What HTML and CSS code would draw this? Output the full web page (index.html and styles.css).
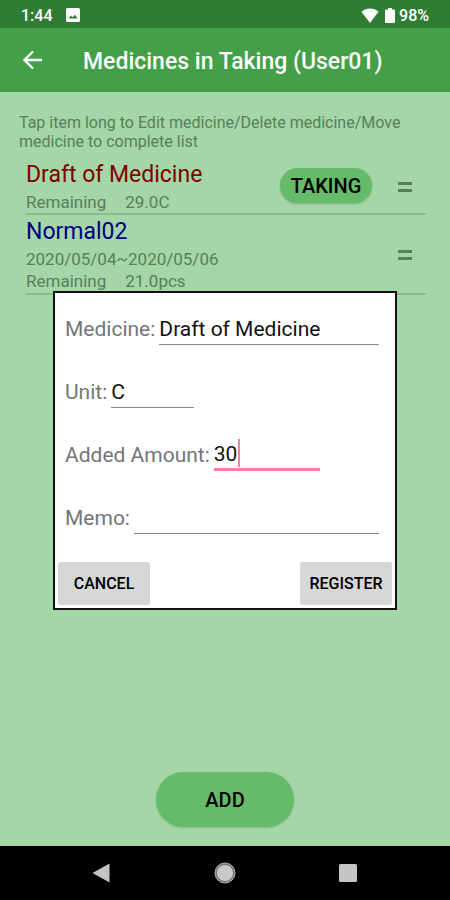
FILE: index.html
```html
<!DOCTYPE html>
<html lang="en">
<head>
<meta charset="utf-8">
<meta name="viewport" content="width=device-width, initial-scale=1">
<title>Medicines in Taking</title>
<link rel="stylesheet" href="styles.css">
</head>
<body>
<div class="status">
  <span class="time">1:44</span>
  <svg class="photo" viewBox="0 0 14 14" width="14" height="14" aria-hidden="true"><rect width="14" height="14" rx="1.5" fill="#fff"/><path d="M2.5 10.5 5 7.5l1.6 1.8L9 6.8l2.7 3.7z" fill="#2e7d32"/></svg>
  <span class="spacer"></span>
  <svg viewBox="0 0 18 15" width="18" height="15" aria-hidden="true"><path d="M9 15 .5 3.8C3 1.500 6 .5 9 .5s6 1 8.500 3.300z" fill="#fff"/></svg>
  <svg class="battery" viewBox="0 0 10 15" width="10" height="15" aria-hidden="true"><path d="M3 0h4v1.600h2q1 0 1 1V14q0 1-1 1H1q-1 0-1-1V2.600q0-1 1-1h2z" fill="#fff"/></svg>
  <span class="percent">98%</span>
</div>
<header class="appbar">
  <button class="back" type="button" aria-label="Back">
    <svg viewBox="0 0 20 20" width="20" height="20" aria-hidden="true"><path d="M19 10H2M10 1.500 1.500 10l8.500 8.500" fill="none" stroke="#fff" stroke-width="2.400"/></svg>
  </button>
  <h1>Medicines in Taking (User01)</h1>
</header>
<main class="content">
  <p class="hint">Tap item long to Edit medicine/Delete medicine/Move medicine to complete list</p>
  <ul class="list">
    <li class="item">
      <div class="info">
        <h2 class="name draft">Draft of Medicine</h2>
        <p class="detail"><span>Remaining</span><span>29.0C</span></p>
      </div>
      <button class="taking" type="button">TAKING</button>
      <span class="handle"></span>
    </li>
    <li class="item">
      <div class="info">
        <h2 class="name normal">Normal02</h2>
        <p class="detail">2020/05/04~2020/05/06</p>
        <p class="detail"><span>Remaining</span><span>21.0pcs</span></p>
      </div>
      <span class="handle"></span>
    </li>
  </ul>
  <button class="add" type="button">ADD</button>
</main>
<nav class="navbar">
  <button type="button" aria-label="Back"><svg viewBox="0 0 22 22" width="22" height="22" aria-hidden="true"><path d="M18.500 1.500v19L1.500 11z" fill="#c4c4c4"/></svg></button>
  <button type="button" aria-label="Home"><svg viewBox="0 0 22 22" width="22" height="22" aria-hidden="true"><circle cx="11" cy="11" r="10" fill="#777" stroke="#b4b4b4"/><circle cx="11" cy="11" r="8" fill="#c8c8c8"/></svg></button>
  <button type="button" aria-label="Recent apps"><svg viewBox="0 0 22 22" width="22" height="22" aria-hidden="true"><rect x="2" y="2" width="18" height="18" rx="1.500" fill="#c4c4c4"/></svg></button>
</nav>
<div class="overlay">
  <form class="dialog">
    <div class="row"><label for="medicine">Medicine:</label><span class="field wide"><input id="medicine" type="text" value="Draft of Medicine"></span></div>
    <div class="row"><label for="unit">Unit:</label><span class="field unit"><input id="unit" type="text" value="C"></span></div>
    <div class="row"><label for="amount">Added Amount:</label><span class="field amount"><input id="amount" type="text" inputmode="numeric" value="30"><span class="caret"></span></span></div>
    <div class="row"><label for="memo">Memo:</label><span class="field wide"><input id="memo" type="text"></span></div>
    <div class="actions"><button type="button">CANCEL</button><button type="button">REGISTER</button></div>
  </form>
</div>
</body>
</html>
```
FILE: styles.css
```css
* { box-sizing: border-box; }

body {
  margin: 0;
  min-height: 100vh;
  display: flex;
  flex-direction: column;
  background: #a5d6a7;
  color: #000;
  font-family: Roboto, "Liberation Sans", sans-serif;
}

h1, h2, p, ul { margin: 0; padding: 0; }

button {
  border: 0;
  padding: 0;
  color: inherit;
  font-family: inherit;
}

svg { display: block; }

.status {
  display: flex;
  align-items: center;
  height: 28px;
  padding: 2px 21px 0;
  background: #2e7d32;
  color: #fff;
  font-size: 16px;
  font-weight: 500;
}

.photo { margin-left: 13px; }
.spacer { flex: 1; }
.battery { margin: 0 4px 0 6px; }

.appbar {
  display: flex;
  align-items: center;
  height: 64px;
  padding: 0 20px;
  background: #43a047;
  color: #fff;
}

.back {
  padding: 0 3px;
  margin-right: 37px;
  background: none;
}

.appbar h1 {
  padding-top: 2px;
  font-size: 23px;
  font-weight: 500;
}

.content {
  flex: 1;
  display: flex;
  flex-direction: column;
  padding: 21px 19px 19px;
}

.hint {
  color: #577f5a;
  font-size: 16px;
  line-height: 19px;
}

.list {
  list-style: none;
  margin: 7px 5px 0 7px;
}

.item {
  display: flex;
  align-items: center;
  border-bottom: 2px solid #8fb991;
}

.info { flex: 1; }

.name {
  font-size: 23px;
  font-weight: 400;
  line-height: 33px;
}

.draft { color: #800000; }
.normal { color: #000080; }

.detail {
  display: flex;
  gap: 19px;
  color: #577f5a;
  font-size: 17px;
  line-height: 22px;
}

.detail + .detail { line-height: 23px; }

.taking {
  width: 92px;
  height: 35px;
  border-radius: 18px;
  background: #66bb6a;
  box-shadow: 0 1px 2px #7fae81;
  font-size: 20px;
  font-weight: 500;
}

.handle {
  width: 14px;
  height: 10px;
  margin: 2px 14px 0 26px;
  border: solid #577f5a;
  border-width: 3px 0;
}

.add {
  align-self: center;
  width: 138px;
  height: 55px;
  margin-top: auto;
  border-radius: 28px;
  background: #66bb6a;
  box-shadow: 0 1px 2px #86b888;
  font-size: 20px;
  font-weight: 500;
}

.navbar {
  display: flex;
  justify-content: space-between;
  align-items: center;
  height: 54px;
  padding: 0 91px;
  background: #000;
}

.navbar button { background: none; }

.overlay {
  position: fixed;
  inset: 0;
  display: flex;
  align-items: center;
  justify-content: center;
  padding: 0 53px;
}

.dialog {
  flex: 1;
  padding: 5px 3px 3px;
  border: 2px solid #111;
  background: #fff;
}

.row {
  display: flex;
  align-items: center;
  gap: 4px;
  height: 63px;
  padding: 0 13px 0 7px;
  color: #757575;
  font-size: 21px;
}

.field {
  position: relative;
  display: flex;
  height: 32px;
  border-bottom: 1px solid #888;
}

.wide { flex: 1; }
.unit { width: 83px; }

.amount {
  width: 106px;
  border-bottom: 3px solid #f47fa3;
}

.field input {
  width: 100%;
  min-width: 0;
  padding: 0;
  border: 0;
  outline: 0;
  background: none;
  color: #111;
  font: inherit;
}

.caret {
  position: absolute;
  left: 24px;
  top: 0;
  width: 2px;
  height: 28px;
  background: #f47fa3;
}

.actions {
  display: flex;
  justify-content: space-between;
  margin-top: 12px;
}

.actions button {
  width: 92px;
  height: 43px;
  border-radius: 2px;
  background: #d6d7d7;
  font-size: 16px;
  font-weight: 500;
}
```
